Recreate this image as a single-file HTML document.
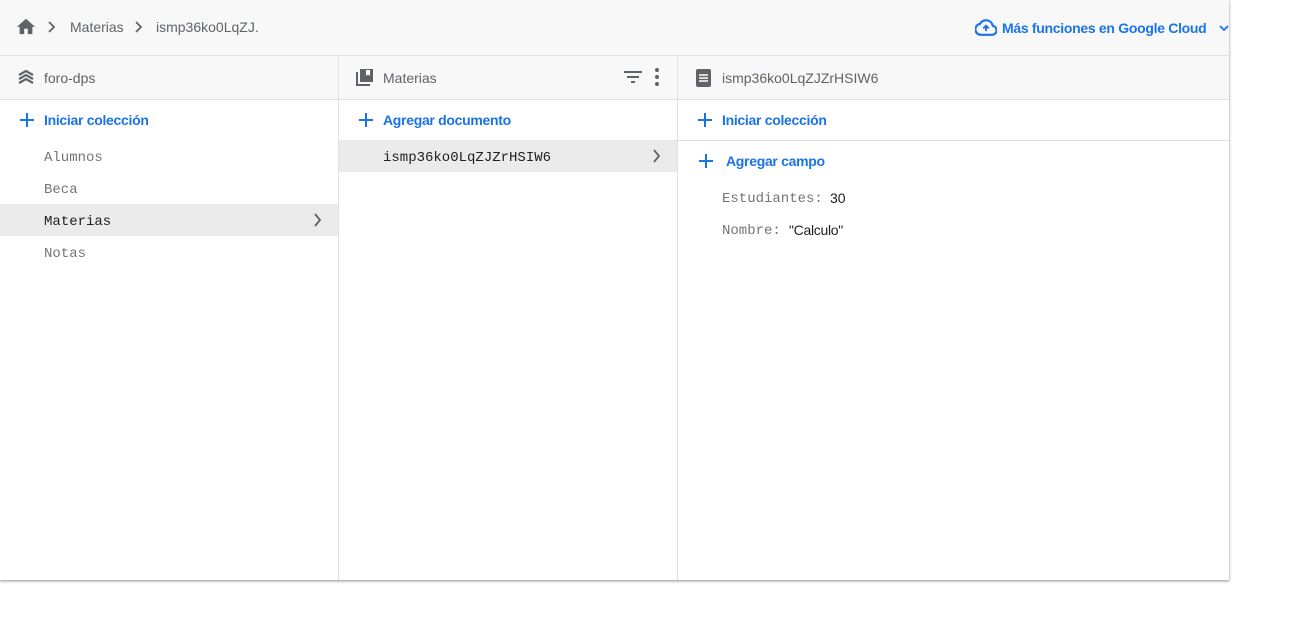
<!DOCTYPE html>
<html><head><meta charset="utf-8"><style>
*{margin:0;padding:0;box-sizing:border-box}
body{width:1293px;height:619px;background:#fff;font-family:"Liberation Sans",sans-serif;position:relative;overflow:hidden}
.card{position:absolute;left:0;top:0;width:1229px;height:580px;background:#fff;box-shadow:0 1px 2px rgba(0,0,0,.3),0 1px 3px 1px rgba(0,0,0,.12)}
.top{position:absolute;left:0;top:0;width:1229px;height:56px;background:#f8f8f8;border-bottom:1px solid #e0e0e0}
.abs{position:absolute;white-space:nowrap}
.crumb{font-size:14px;color:#5f6368;top:19px}
.col{position:absolute;top:56px;bottom:0;border-right:1px solid #e0e0e0}
.hdr{position:absolute;left:0;right:0;top:0;height:44px;background:#f8f8f8;border-bottom:1px solid #e0e0e0}
.hdr span{position:absolute;top:14px;font-size:14px;color:#5f6368}
.blue{color:#1a73e8;font-size:14px;font-weight:bold;letter-spacing:-0.3px}
.mono{font-family:"Liberation Mono",monospace;font-size:14px}
.plus{position:absolute;width:14px;height:14px}
.plus:before{content:"";position:absolute;left:6px;top:0;width:2px;height:14px;background:#1a73e8}
.plus:after{content:"";position:absolute;left:0;top:6px;width:14px;height:2px;background:#1a73e8}
</style></head><body>
<div class="card">
<div class="top">
<svg class="abs" style="left:15px;top:16px" width="22" height="20" viewBox="0 0 24 22"><path d="M10 20v-6h4v6h5v-8h3L12 3 2 12h3v8z" fill="#5f6368"/></svg>
<svg class="abs" style="left:47px;top:21px" width="10" height="12" viewBox="0 0 10 12"><path d="M2 1l5 5-5 5" stroke="#5f6368" stroke-width="1.8" fill="none"/></svg>
<span class="abs crumb" style="left:70px">Materias</span>
<svg class="abs" style="left:134px;top:21px" width="10" height="12" viewBox="0 0 10 12"><path d="M2 1l5 5-5 5" stroke="#5f6368" stroke-width="1.8" fill="none"/></svg>
<span class="abs crumb" style="left:156px">ismp36ko0LqZJ.</span>
<svg class="abs" style="left:975px;top:19px" width="22" height="17" viewBox="0 0 24 18"><path d="M19.4 7.1A7.5 7.5 0 0 0 5.4 5.1 6 6 0 0 0 6 17h13a5 5 0 0 0 .4-9.9z" fill="none" stroke="#1a73e8" stroke-width="2.4"/><path d="M12 7v6M9 10l3-3 3 3" stroke="#1a73e8" stroke-width="2" fill="none"/></svg>
<span class="abs blue" style="left:1002px;top:20px">Más funciones en Google Cloud</span>
<svg class="abs" style="left:1219px;top:24px" width="10" height="8" viewBox="0 0 10 8"><path d="M1 2l4 4 4-4" stroke="#1a73e8" stroke-width="1.8" fill="none"/></svg>
</div>

<div class="col" style="left:0;width:339px">
<div class="hdr"><svg class="abs" style="left:17px;top:13px" width="18" height="18" viewBox="0 0 18 18"><path d="M2 6l7-4 7 4M2 10l7-4 7 4M2 14l7-4 7 4" stroke="#5f6368" stroke-width="2.2" fill="none"/></svg><span style="left:44px">foro-dps</span></div>
<div class="plus" style="left:20px;top:57px"></div>
<span class="abs blue" style="left:44px;top:56px">Iniciar colección</span>
<span class="abs mono" style="left:44px;top:94px;color:#757575">Alumnos</span>
<span class="abs mono" style="left:44px;top:126px;color:#757575">Beca</span>
<div class="abs" style="left:0;top:148px;width:338px;height:32px;background:#ebebeb"></div>
<span class="abs mono" style="left:44px;top:158px;color:#202124">Materias</span>
<svg class="abs" style="left:313px;top:157px" width="10" height="14" viewBox="0 0 10 14"><path d="M2 1l5 6-5 6" stroke="#5f6368" stroke-width="1.8" fill="none"/></svg>
<span class="abs mono" style="left:44px;top:190px;color:#757575">Notas</span>
</div>

<div class="col" style="left:339px;width:339px">
<div class="hdr"><svg class="abs" style="left:16px;top:12px" width="20" height="20" viewBox="0 0 20 20"><path d="M1 4v14h14v-2H3V4z" fill="#5f6368"/><path d="M5 1h13v13H5z" fill="#5f6368"/><path d="M11 2v6l2-1.5 2 1.5V2z" fill="#fff"/></svg><span style="left:44px">Materias</span>
<svg class="abs" style="left:285px;top:15px" width="18" height="12" viewBox="0 0 18 12"><path d="M0 1h18M3 6h12M7 11h4" stroke="#5f6368" stroke-width="2"/></svg>
<svg class="abs" style="left:315px;top:12px" width="6" height="18" viewBox="0 0 6 18"><circle cx="3" cy="2" r="2" fill="#5f6368"/><circle cx="3" cy="9" r="2" fill="#5f6368"/><circle cx="3" cy="16" r="2" fill="#5f6368"/></svg></div>
<div class="plus" style="left:20px;top:57px"></div>
<span class="abs blue" style="left:44px;top:56px">Agregar documento</span>
<div class="abs" style="left:0;top:84px;width:338px;height:32px;background:#ebebeb"></div>
<span class="abs mono" style="left:44px;top:94px;color:#202124">ismp36ko0LqZJZrHSIW6</span>
<svg class="abs" style="left:313px;top:93px" width="10" height="14" viewBox="0 0 10 14"><path d="M2 1l5 6-5 6" stroke="#5f6368" stroke-width="1.8" fill="none"/></svg>
</div>

<div class="col" style="left:678px;width:551px;border-right:none">
<div class="hdr"><svg class="abs" style="left:18px;top:13px" width="15" height="18" viewBox="0 0 15 18"><rect x="0" y="0" width="15" height="18" rx="2" fill="#5f6368"/><path d="M3 6h9M3 9h9M3 12h9" stroke="#fff" stroke-width="1.5"/></svg><span style="left:44px">ismp36ko0LqZJZrHSIW6</span></div>
<div class="plus" style="left:20px;top:57px"></div>
<span class="abs blue" style="left:44px;top:56px">Iniciar colección</span>
<div class="abs" style="left:0;top:84px;width:551px;height:1px;background:#e0e0e0"></div>
<div class="plus" style="left:21px;top:98px"></div>
<span class="abs blue" style="left:48px;top:97px">Agregar campo</span>
<span class="abs mono" style="left:44px;top:135px;color:#757575">Estudiantes:</span>
<span class="abs" style="left:152px;top:134px;font-size:14px;color:#202124">30</span>
<span class="abs mono" style="left:44px;top:167px;color:#757575">Nombre:</span>
<span class="abs" style="left:111px;top:166px;font-size:14px;color:#202124;letter-spacing:-0.3px">"Calculo"</span>
</div>
</div>
</body></html>
